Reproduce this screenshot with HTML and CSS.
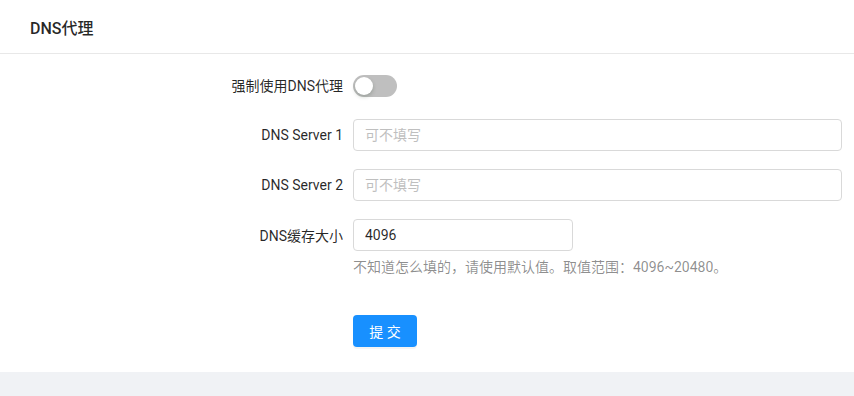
FILE: index.html
```html
<!DOCTYPE html>
<html lang="zh-CN">
<head>
    <meta charset="UTF-8">
    <meta name="viewport" content="width=device-width, initial-scale=1.0">
    <title>DNS代理</title>
    <link rel="stylesheet" href="styles.css">
</head>
<body>
    <div class="card">
        <div class="card-head">DNS代理</div>
        <form class="card-body">
            <div class="row">
                <label class="label">强制使用DNS代理</label>
                <div class="control">
                    <button type="button" class="switch"><span class="handle"></span></button>
                </div>
            </div>
            <div class="row">
                <label class="label">DNS Server 1</label>
                <div class="control">
                    <input class="input" type="text" placeholder="可不填写">
                </div>
            </div>
            <div class="row">
                <label class="label">DNS Server 2</label>
                <div class="control">
                    <input class="input" type="text" placeholder="可不填写">
                </div>
            </div>
            <div class="row">
                <label class="label">DNS缓存大小</label>
                <div class="control">
                    <input class="input small" type="text" value="4096">
                </div>
            </div>
            <div class="help">不知道怎么填的，请使用默认值。取值范围：4096~20480。</div>
            <div class="actions">
                <button type="button" class="btn">提 交</button>
            </div>
        </form>
    </div>
</body>
</html>
```

FILE: styles.css
```css
body {
    margin: 0;
    background: #f0f2f5;
    font-family: Roboto, "Noto Sans CJK SC", sans-serif;
    font-size: 14px;
    color: rgba(0, 0, 0, 0.85);
    text-spacing-trim: space-all;
}
.card {
    background: #fff;
}
.card-head {
    height: 53px;
    display: flex;
    align-items: center;
    padding: 0 30px;
    border-bottom: 1px solid #e8e8e8;
    font-size: 16px;
    font-weight: 500;
}
.card-body {
    display: flex;
    flex-direction: column;
    gap: 18px;
    padding: 15px 12px 25px 0;
    margin: 0;
}
.row {
    display: flex;
    align-items: center;
    height: 32px;
}
.label {
    width: 343px;
    padding-right: 10px;
    text-align: right;
    flex-shrink: 0;
}
.control {
    flex: 1;
}
.switch {
    position: relative;
    width: 44px;
    height: 22px;
    border: none;
    border-radius: 11px;
    background: #bfbfbf;
    padding: 0;
    display: block;
    margin-top: 1px;
}
.handle {
    position: absolute;
    top: 2px;
    left: 2px;
    width: 18px;
    height: 18px;
    border-radius: 50%;
    background: #fff;
    box-shadow: 0 2px 4px rgba(0, 35, 11, 0.2);
}
.input {
    box-sizing: border-box;
    width: 100%;
    height: 32px;
    padding: 4px 11px;
    border: 1px solid #d9d9d9;
    border-radius: 4px;
    font-family: inherit;
    font-size: 14px;
    color: rgba(0, 0, 0, 0.85);
    outline: none;
}
.input::placeholder {
    color: #bfbfbf;
}
.input.small {
    width: 220px;
}
.help {
    margin: -13px 0 0 353px;
    line-height: 22px;
    color: rgba(0, 0, 0, 0.45);
}
.actions {
    margin: 19px 0 0 353px;
}
.btn {
    width: 64px;
    height: 32px;
    border: none;
    border-radius: 4px;
    background: #1890ff;
    color: #fff;
    font-family: inherit;
    font-size: 14px;
    box-shadow: 0 2px 0 rgba(0, 0, 0, 0.045);
}
```
